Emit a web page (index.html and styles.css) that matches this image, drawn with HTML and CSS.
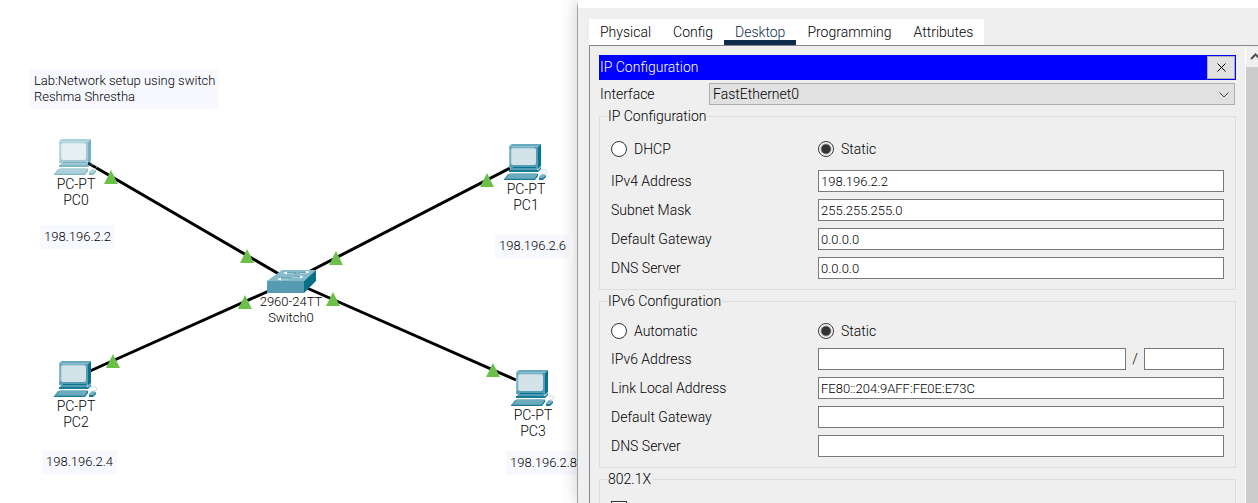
FILE: index.html
```
<!DOCTYPE html>
<html lang="en">
<head>
<meta charset="utf-8">
<title>IP Configuration</title>
<link rel="stylesheet" href="styles.css">
</head>
<body>
<main class="workspace">
  <svg class="links" width="577" height="503" aria-hidden="true">
    <g stroke="#000" stroke-width="3">
      <path d="M88 163L291 281M510 168L291 281M90 371L291 281M516 380L291 281"/>
    </g>
    <g fill="#6cc04a">
      <path d="M111 170l7 14h-14zM247 249l7 14h-14zM336 251l7 14h-14zM245 295l7 14h-14zM333 292l7 14h-14zM487 173l7 14h-14zM113 354l7 14h-14zM493 363l7 14h-14z"/>
    </g>
  </svg>

  <svg width="0" height="0" class="defs" aria-hidden="true">
    <symbol id="pc" viewBox="0 0 44 36">
      <path d="M5 2L8 0H37L34 3V24H5z" fill="#66a9bd"/>
      <path d="M34 3L37 0V22L34 25z" fill="#087590"/>
      <path d="M5 2H34V23H5z" fill="#559cb2"/>
      <path d="M5 2H34V3H6V22H5z" fill="#8ac0cf"/>
      <rect x="7" y="4" width="25" height="17" rx="2" fill="#d3e3e9"/>
      <path d="M7 20V6Q7 4 9 4H31" fill="none" stroke="#9bc7d3"/>
      <path d="M9 23H32L33 25H8z" fill="#087590"/>
      <path d="M7 24H34L32 28H5z" fill="#549cb2"/>
      <path d="M5 26H34L37 23V25L34 28H5z" fill="#167b95"/>
      <path d="M6 29H32L35 31H4z" fill="#8abdcb"/>
      <path d="M4 30H33L30 35H0z" fill="#559cb2"/>
      <path d="M5 31H32M4 33H31" stroke="#82b9c9" stroke-width="1"/>
      <path d="M0 35H30L34 29V32L31 36H0z" fill="#167b95"/>
      <path d="M37 26Q43 25 43 28Q42 30 39 30" fill="none" stroke="#c5dce4"/>
      <path d="M38 30L42 31L39 35L35 35V33z" fill="#78b1c3"/>
      <path d="M35 34H39L42 31V33L39 36H35z" fill="#1d7e97"/>
    </symbol>
  </svg>

  <p class="note" style="left:30px;top:69px">Lab:Network setup using switch<br>Reshma Shrestha</p>

  <figure class="device faded" style="left:54px;top:139px"><svg><use href="#pc"/></svg><figcaption>PC-PT<br>PC0</figcaption></figure>
  <figure class="device" style="left:504px;top:144px"><svg><use href="#pc"/></svg><figcaption>PC-PT<br>PC1</figcaption></figure>
  <figure class="device" style="left:54px;top:361px"><svg><use href="#pc"/></svg><figcaption>PC-PT<br>PC2</figcaption></figure>
  <figure class="device" style="left:511px;top:370px"><svg><use href="#pc"/></svg><figcaption>PC-PT<br>PC3</figcaption></figure>
  <figure class="device switch" style="left:257px;top:270px">
    <svg viewBox="0 0 49 23">
      <path d="M15 0H49L37 11H0z" fill="#87bacb"/>
      <path d="M0 11H37V23H0z" fill="#559cb2"/>
      <path d="M37 11L49 0V11L37 23z" fill="#087087"/>
      <path d="M18 3H29M31 3H40M12 8H23M27 7H36" stroke="#4c92a9"/>
      <path d="M16 3l4-1.500v3zM43 2l-4-1.500v3zM10 9l4-1.500v3zM37 7l-4-1.500v3z" fill="#fff"/>
      <path d="M18 3.500H27M32 3.500H40M12 9H22M26 7.500H35" stroke="#d2e6ec" stroke-width=".6"/>
    </svg>
    <figcaption>2960-24TT<br>Switch0</figcaption>
  </figure>

  <p class="note" style="left:40px;top:225px">198.196.2.2</p>
  <p class="note" style="left:495px;top:234px">198.196.2.6</p>
  <p class="note" style="left:42px;top:450px">198.196.2.4</p>
  <p class="note" style="left:506px;top:451px">198.196.2.8</p>
</main>

<section class="dialog">
  <nav class="tabs">
    <button type="button">Physical</button>
    <button type="button">Config</button>
    <button type="button" class="active">Desktop</button>
    <button type="button">Programming</button>
    <button type="button">Attributes</button>
  </nav>
  <div class="panel">
    <form class="content">
      <header class="titlebar">
        <h1>IP Configuration</h1>
        <button type="button" aria-label="Close"><svg width="9" height="9"><path d="M.5.5l8 8M8.500.5l-8 8" stroke="#000" fill="none"/></svg></button>
      </header>
      <div class="interface">
        <label for="iface">Interface</label>
        <div class="select">
          <select id="iface"><option>FastEthernet0</option></select>
          <svg width="10" height="6"><path d="M.5.5L5 5L9.500.5" stroke="#444" fill="none"/></svg>
        </div>
      </div>

      <fieldset>
        <legend>IP Configuration</legend>
        <div class="row modes first">
          <label><input type="radio" name="v4">DHCP</label>
          <label><input type="radio" name="v4" checked>Static</label>
        </div>
        <div class="row"><label for="ip4">IPv4 Address</label><input type="text" id="ip4" value="198.196.2.2"></div>
        <div class="row"><label for="mask">Subnet Mask</label><input type="text" id="mask" value="255.255.255.0"></div>
        <div class="row"><label for="gw4">Default Gateway</label><input type="text" id="gw4" value="0.0.0.0"></div>
        <div class="row"><label for="dns4">DNS Server</label><input type="text" id="dns4" value="0.0.0.0"></div>
      </fieldset>

      <fieldset>
        <legend>IPv6 Configuration</legend>
        <div class="row modes">
          <label><input type="radio" name="v6">Automatic</label>
          <label><input type="radio" name="v6" checked>Static</label>
        </div>
        <div class="row">
          <label for="ip6">IPv6 Address</label>
          <div class="prefix"><input type="text" id="ip6"><span>/</span><input type="text" class="length" aria-label="Prefix length"></div>
        </div>
        <div class="row"><label for="ll">Link Local Address</label><input type="text" id="ll" value="FE80::204:9AFF:FE0E:E73C"></div>
        <div class="row"><label for="gw6">Default Gateway</label><input type="text" id="gw6"></div>
        <div class="row"><label for="dns6">DNS Server</label><input type="text" id="dns6"></div>
      </fieldset>

      <fieldset>
        <legend>802.1X</legend>
        <input type="checkbox" class="check" aria-label="Use 802.1X Security">
      </fieldset>
    </form>
    <div class="scrollbar">
      <svg width="17" height="21"><path d="M5 13l4.500-4.500L14 13" stroke="#505050" stroke-width="2" fill="none"/></svg>
      <div class="thumb"></div>
    </div>
  </div>
</section>
</body>
</html>
```

FILE: styles.css
```
* { box-sizing: border-box; }

body {
  margin: 0;
  height: 100vh;
  overflow: hidden;
  display: grid;
  grid-template-columns: 577fr 681fr;
  grid-template-rows: 100%;
  background: #fff;
  color: #000;
  font: 14px/16px Roboto, "Liberation Sans", sans-serif;
  font-weight: 300;
}

button, input, select { font: inherit; color: inherit; border-radius: 0; }

/* Topology canvas */
.workspace { position: relative; overflow: hidden; }
.links, .defs { position: absolute; left: 0; top: 0; }

.note {
  position: absolute;
  margin: 0;
  padding: 4px;
  background: #f8f9ff;
  font-size: 13px;
  white-space: nowrap;
}

.device {
  position: absolute;
  margin: 0;
  width: 44px;
  text-align: center;
  white-space: nowrap;
}
.device svg { display: block; width: 44px; height: 36px; }
.device figcaption { margin-top: 1px; }
.faded svg { opacity: .55; }
.switch { width: 68px; }
.switch svg { width: 49px; height: 23px; margin-left: 10px; }
.switch figcaption { font-size: 13px; }

/* Device window */
.dialog {
  position: relative;
  display: flex;
  flex-direction: column;
  min-width: 0;
  border-left: 1px solid #a0a0a0;
  border-top: 8px solid #fff;
  padding: 11px 0 0 11px;
  background: #efefef;
  box-shadow: 0 0 16px rgba(0, 0, 0, .2);
}

.tabs { display: flex; flex: none; align-self: flex-start; height: 26px; background: #fff; }
.tabs button { border: 0; border-bottom: 5px solid transparent; padding: 5px 11px 0; background: none; }
.tabs .active { border-color: #102a4e; color: #102a4e; }

.panel {
  flex: 1;
  min-height: 0;
  display: flex;
  border: solid #85858f;
  border-width: 1px 0 0 1px;
  overflow: hidden;
}
.content { flex: 1; min-width: 0; padding: 9px; }

.titlebar {
  display: flex;
  justify-content: space-between;
  height: 25px;
  padding: 1px;
  background: #00f;
  color: #fff;
}
.titlebar h1 { margin: 0; font: inherit; line-height: 23px; }
.titlebar button {
  display: grid;
  place-items: center;
  width: 28px;
  padding: 0;
  border: 1px solid #adadad;
  background: #e1e1e1;
}

.interface { display: flex; align-items: center; padding: 3px 1px; }
.interface label { flex: 0 0 109px; }
.select { position: relative; flex: 1; }
.select select {
  display: block;
  width: 100%;
  height: 22px;
  padding: 0 3px;
  border: 1px solid #adadad;
  background: #e1e1e1;
  appearance: none;
}
.select svg { position: absolute; right: 6px; top: 9px; }

fieldset {
  min-width: 0;
  margin: 0 0 3px;
  padding: 10px 11px;
  border: 1px solid #dcdcdc;
}
legend { margin-left: -4px; padding: 0 1px; }

.row { display: grid; grid-template-columns: 207px 1fr; align-items: center; }
.row > label { min-width: 0; }
.row + .row { margin-top: 7px; }
.modes { height: 24px; margin: 0 0 5px; }
.modes.first { margin: 3px 0 9px; }
.modes + .row { margin-top: 0; }
.modes label { display: flex; align-items: center; gap: 7px; }

input[type="text"] {
  width: 100%;
  min-width: 0;
  height: 22px;
  padding: 0 2px;
  border: 1px solid #7a7a7a;
  background: #fff;
  font-size: 13px;
}
input[type="radio"] {
  appearance: none;
  width: 16px;
  height: 16px;
  margin: 0;
  border: 1px solid #333;
  border-radius: 50%;
  background: #fff;
}
input[type="radio"]:checked { background: radial-gradient(circle, #333 4px, #fff 6px); }

.prefix { display: flex; align-items: center; }
.prefix span { flex: 0 0 18px; text-align: center; }
.prefix .length { flex: 0 0 80px; }

.check {
  appearance: none;
  display: block;
  width: 16px;
  height: 16px;
  margin: 4px 0 0;
  border: 1px solid #333;
  background: #fff;
}

.scrollbar {
  flex: 0 0 13px;
  display: flex;
  flex-direction: column;
  border-left: 1px solid #fff;
  background: #f0f0f0;
  overflow: hidden;
}
.scrollbar svg { flex: none; }
.thumb { flex: 1; background: #cdcdcd; }
```
